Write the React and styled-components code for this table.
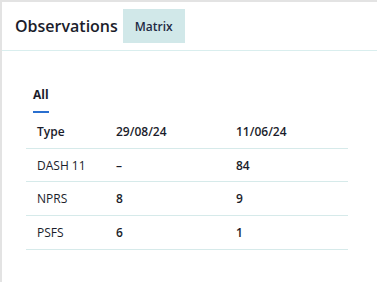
import React from 'react';
import styled, { createGlobalStyle } from 'styled-components';

const GlobalStyle = createGlobalStyle`
  html, body {
    margin: 0;
    padding: 0;
    background: #fff;
  }
  body {
    font-family: 'Open Sans', 'Noto Sans', sans-serif;
    color: #1b1d2b;
  }
`;

const Panel = styled.div`
  box-sizing: border-box;
  height: 282px;
  border-top: 2px solid #e3e3e3;
  border-left: 2px solid #e3e3e3;
  background: #fff;
`;

const Header = styled.div`
  display: flex;
  align-items: flex-start;
  gap: 5px;
  height: 49px;
  padding: 7px 0 0 13px;
  border-bottom: 1px solid #d9eeee;
  box-sizing: border-box;
`;

const Title = styled.h1`
  margin: 0;
  line-height: 34px;
  font-size: 16px;
  font-weight: 600;
  color: #1b1d2b;
`;

const ViewTab = styled.button`
  height: 34px;
  padding: 0 12px;
  border: none;
  background: ${(p) => (p.$active ? '#d1e8e9' : 'transparent')};
  font-family: inherit;
  font-size: 12px;
  font-weight: 600;
  color: #1f2a44;
`;

const Body = styled.div`
  padding: 35px 28px 0 24px;
`;

const FilterBar = styled.div`
  display: flex;
  padding-left: 7px;
`;

const FilterTab = styled.div`
  padding: 0 0 8px;
  font-size: 12px;
  font-weight: 700;
  color: #1b1d2b;
  border-bottom: 2px solid ${(p) => (p.$active ? '#2a6fcf' : 'transparent')};
`;

const Table = styled.div`
  margin-top: 2px;
  width: 322px;
`;

const Row = styled.div`
  display: grid;
  grid-template-columns: 79px 120px 1fr;
  align-items: center;
  height: 33.7px;
  border-bottom: 1px solid #d6eaea;
  box-sizing: border-box;
`;

const Cell = styled.div`
  padding-left: 11px;
  font-size: 12px;
  font-weight: ${(p) => (p.$strong ? 600 : 400)};
  color: #1b1d2b;
`;

const dates = ['29/08/24', '11/06/24'];
const rows = [
  { type: 'DASH 11', values: ['–', '84'] },
  { type: 'NPRS', values: ['8', '9'] },
  { type: 'PSFS', values: ['6', '1'] },
];

export default function App() {
  return (
    <>
      <GlobalStyle />
      <Panel>
        <Header>
          <Title>Observations</Title>
          <ViewTab $active>Matrix</ViewTab>
        </Header>
        <Body>
          <FilterBar>
            <FilterTab $active>All</FilterTab>
          </FilterBar>
          <Table>
            <Row>
              <Cell $strong>Type</Cell>
              {dates.map((d) => (
                <Cell $strong key={d}>{d}</Cell>
              ))}
            </Row>
            {rows.map((r) => (
              <Row key={r.type}>
                <Cell>{r.type}</Cell>
                {r.values.map((v, i) => (
                  <Cell $strong key={i}>{v}</Cell>
                ))}
              </Row>
            ))}
          </Table>
        </Body>
      </Panel>
    </>
  );
}
